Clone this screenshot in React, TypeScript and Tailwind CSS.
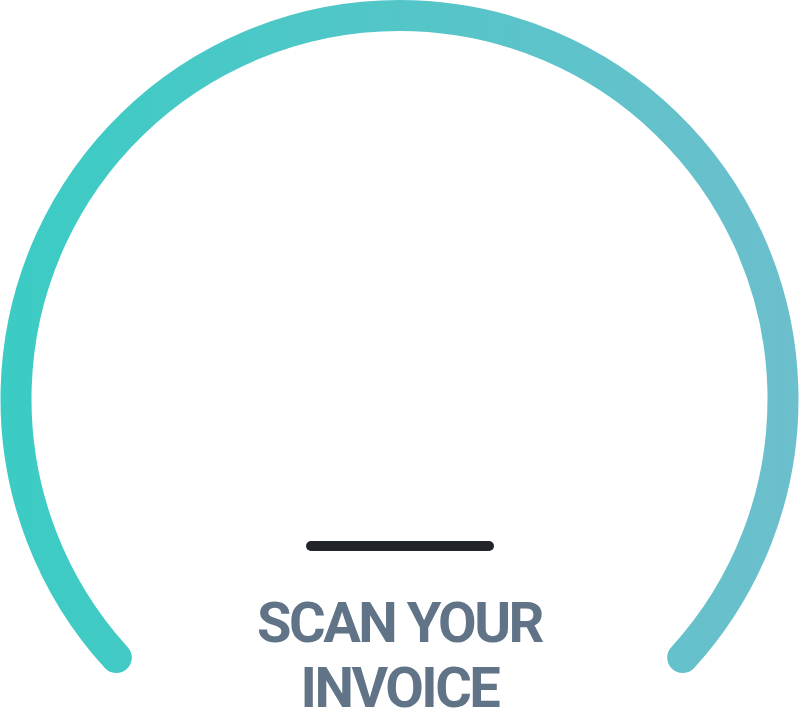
export default function App() {
  // arc centre (399.5, 399), radius 383.5, ends ~42.4deg below horizontal
  const cx = 399.5;
  const cy = 399;
  const r = 383.5;
  const a = (42.4 * Math.PI) / 180;
  const x1 = cx - r * Math.cos(a);
  const y1 = cy + r * Math.sin(a);
  const x2 = cx + r * Math.cos(a);
  const y2 = y1;

  return (
    <div className="relative h-[709px] w-[799px] overflow-hidden bg-white">
      <svg className="absolute inset-0" width="799" height="709" viewBox="0 0 799 709">
        <defs>
          <linearGradient id="arc" x1="0" y1="0" x2="799" y2="0" gradientUnits="userSpaceOnUse">
            <stop offset="0" stopColor="#3bccc4" />
            <stop offset="1" stopColor="#6cbfcc" />
          </linearGradient>
        </defs>
        <path
          d={`M ${x1} ${y1} A ${r} ${r} 0 1 1 ${x2} ${y2}`}
          fill="none"
          stroke="url(#arc)"
          strokeWidth="31"
          strokeLinecap="round"
        />
      </svg>

      <div className="relative flex flex-col items-center pt-[541px]">
        <div className="h-[10px] w-[188px] rounded-full bg-[#212529]" />
        <h1
          className="mt-[40px] text-center text-[56px] font-bold leading-[65px] tracking-[-2.5px] text-[#617386]"
          style={{ fontFamily: 'Roboto, "Open Sans", sans-serif' }}
        >
          SCAN YOUR
          <br />
          INVOICE
        </h1>
      </div>
    </div>
  );
}
